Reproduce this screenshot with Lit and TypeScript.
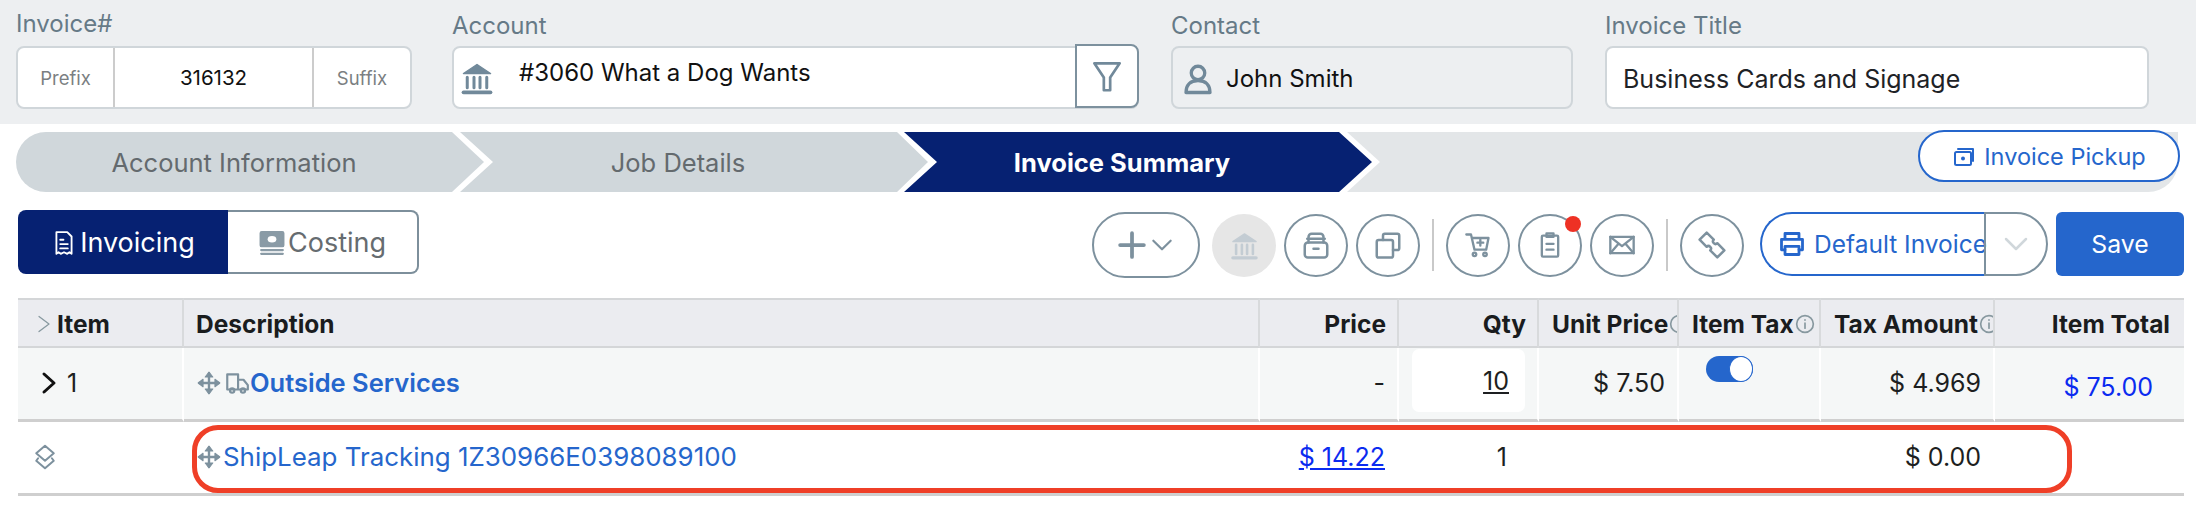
import { LitElement, html, css, svg } from 'lit';
import { customElement } from 'lit/decorators.js';

const icon = (size: number, body: unknown, sw = 2) => html`<svg class="ic" width=${size} height=${size} viewBox="0 0 24 24" fill="none" stroke="currentColor" stroke-width=${sw} stroke-linecap="round" stroke-linejoin="round">${body}</svg>`;

const bank = svg`<path d="M3 9 12 3l9 6z" fill="currentColor" stroke-width="1"/><path d="M5.500 11.500v7M10 11.500v7M14 11.500v7M18.500 11.500v7"/><path d="M3 21.500h18" stroke-width="2.500"/>`;
const move = svg`<path d="M12 3v18M3 12h18" stroke-width="2.200"/><path d="M8.500 6.500 12 2l3.500 4.500zM8.500 17.500 12 22l3.500-4.500zM6.500 8.500 2 12l4.500 3.500zM17.500 8.500 22 12l-4.500 3.500z" fill="currentColor" stroke-width="1"/>`;
const info = svg`<circle cx="12" cy="12" r="10"/><path d="M12 11v6M12 7v.5"/>`;

@customElement('app-root')
export class AppRoot extends LitElement {
  static styles = css`
    :host { display: block; position: relative; width: 2196px; height: 518px; background: #fff; overflow: hidden; font-family: Inter, 'Liberation Sans', sans-serif; color: #212529; }
    .ic { display: block; flex: none; }

    .top { display: flex; height: 124px; box-sizing: border-box; background: #edeff1; padding: 14px 0 0 16px; }
    .field { display: flex; flex-direction: column; gap: 8px; }
    .field label { font-size: 24px; line-height: 24px; color: #667a87; }
    .box { display: flex; align-items: center; box-sizing: border-box; height: 63px; border: 2px solid #d0d6da; border-radius: 8px; background: #fff; font-size: 24px; }
    .invoice { width: 396px; margin-right: 40px; }
    .invoice label { margin-top: -2px; margin-bottom: 2px; }
    .invoice .box span { display: flex; align-items: center; justify-content: center; height: 100%; font-size: 18.500px; }
    .side { color: #7b7f82; width: 95px; }
    .side.end { flex: 1; }
    .invoice .box .num { width: 197px; color: #111; font-size: 20.500px; border-left: 2px solid #ccc; border-right: 2px solid #ccc; }
    .account { width: 687px; margin-right: 32px; }
    .account .box { position: relative; padding-left: 5px; gap: 24px; color: #111; }
    .account .name { margin-top: -11px; }
    .muted { color: #71899a; }
    .filter { position: absolute; right: -2px; top: -4px; width: 64px; height: 64px; box-sizing: border-box; display: flex; align-items: center; justify-content: center; background: #fff; border: 2px solid #7d919e; border-radius: 0 8px 8px 0; color: #71899a; }
    .contact { width: 402px; margin-right: 32px; }
    .contact .box { background: #edeff1; padding: 2px 0 0 7px; gap: 10px; color: #111; }
    .title { width: 544px; }
    .title .box { padding: 2px 0 0 16px; color: #1e2226; font-size: 25px; }

    .steps { position: relative; height: 60px; margin: 8px 0 0 16px; width: 2162px; background: #e3e6e8; border-radius: 0 0 30px 0; }
    .under { position: absolute; left: 0; top: 0; width: 1364px; height: 60px; background: #fff; clip-path: polygon(0 0, 1331px 0, 1364px 50%, 1331px 100%, 0 100%); }
    .step { position: absolute; top: 0; width: 468px; height: 60px; box-sizing: border-box; padding: 1px 32px 0 0; display: flex; align-items: center; justify-content: center; font-size: 25.500px; color: #646a6e; background: #d0d7db; }
    .s1 { left: 0; border-radius: 30px 0 0 30px; clip-path: polygon(0 0, 436px 0, 468px 50%, 436px 100%, 0 100%); }
    .s2 { left: 444px; clip-path: polygon(0 0, 437px 0, 468px 50%, 437px 100%, 0 100%, 33px 50%); }
    .s3 { left: 888px; color: #fff; font-weight: 700; background: #062172; clip-path: polygon(0 0, 435px 0, 468px 50%, 435px 100%, 0 100%, 33px 50%); }
    .pickup { position: absolute; right: -2px; top: -2px; width: 262px; height: 52px; box-sizing: border-box; display: flex; align-items: center; justify-content: center; gap: 8px; background: #fff; border: 2px solid #2566cc; border-radius: 26px; color: #2566cc; font-size: 23.500px; }

    .bar { display: flex; align-items: flex-start; height: 66px; margin-top: 18px; padding-left: 18px; }
    .tabs { display: flex; height: 64px; width: 401px; margin-right: 673px; flex: none; }
    .tab { display: flex; align-items: center; justify-content: center; gap: 3px; padding-top: 1px; font-size: 27px; box-sizing: border-box; }
    .tab.on { width: 210px; background: #062172; color: #fff; border-radius: 8px 0 0 8px; }
    .tab.off { flex: 1; background: #fff; color: #666c70; border: 2px solid #7d8f9b; border-left: 0; border-radius: 0 8px 8px 0; }
    .money { color: #8a9ba6; }
    .tools { display: flex; align-items: center; gap: 8px; height: 66px; margin-top: 2px; }
    .circ { position: relative; width: 64px; height: 63px; box-sizing: border-box; display: flex; align-items: center; justify-content: center; border: 2px solid #7d919e; border-radius: 50%; color: #7d919e; }
    .circ.add { width: 108px; height: 66px; margin-right: 4px; border-radius: 33px; gap: 2px; }
    .circ.dim { border: 0; background: #e6e6e6; color: #c3ccd3; }
    .dot { position: absolute; right: -1px; top: 0; width: 16px; height: 16px; border-radius: 50%; background: #ee3124; }
    .sep { width: 2px; height: 52px; background: #c9c9c9; margin: 0 4px; }
    .print { display: flex; height: 64px; margin: 2px 0 0 16px; }
    .print .main { width: 224px; box-sizing: border-box; display: flex; align-items: center; gap: 8px; padding-left: 16px; border: 2px solid #2566cc; border-right: 0; border-radius: 32px 0 0 32px; color: #2566cc; font-size: 24.500px; white-space: nowrap; }
    .print .more { width: 64px; box-sizing: border-box; display: flex; align-items: center; justify-content: center; border: 2px solid #7d919e; border-radius: 0 32px 32px 0; color: #d0d7db; }
    .save { width: 128px; height: 64px; margin: 2px 0 0 8px; display: flex; align-items: center; justify-content: center; background: #2566cc; border-radius: 6px; color: #fff; font-size: 24.800px; }

    .grid { display: grid; grid-template-columns: 166px 1076px 139px 140px 140px 142px 174px 1fr; margin: 22px 12px 0 18px; font-size: 25px; }
    .h { display: flex; align-items: center; justify-content: flex-end; box-sizing: border-box; height: 50px; padding: 2px 11px 0 0; background: #ebecf0; border-top: 2px solid #d4d6d8; border-bottom: 2px solid #d4d6d8; border-right: 2px solid #d8dadc; font-weight: 700; font-size: 24.500px; color: #1a1c1e; white-space: nowrap; overflow: hidden; }
    .h.left { justify-content: flex-start; padding: 2px 0 0 12px; }
    .h.first { padding-left: 16px; gap: 3px; }
    .h.tight { justify-content: flex-start; padding: 2px 0 0 13px; }
    .h.last { border-right: 0; padding-right: 14px; }
    .info { color: #87989f; margin-left: 1px; flex: none; }
    .caret { color: #87989f; }

    .c, .r { display: flex; align-items: center; justify-content: flex-end; box-sizing: border-box; height: 74px; padding: 0 14px 2px 0; color: #1d1f21; border-bottom: 3px solid #cfcfcf; white-space: nowrap; }
    .c { background: #f5f7f7; border-right: 2px solid #fff; padding-right: 12px; }
    .r { background: #fff; }
    .c.left, .r.left { justify-content: flex-start; padding-left: 12px; }
    .c.item { gap: 6px; padding-left: 19px; }
    .c.item span { color: #111; }
    .c.qty { align-items: flex-start; padding: 1px 12px 0 0; }
    .qbox { width: 113px; height: 63px; padding: 0 16px 0 0; box-sizing: border-box; display: flex; align-items: center; justify-content: flex-end; background: #fff; border-radius: 7px; text-decoration: underline; }
    .c.tax { justify-content: flex-start; align-items: flex-start; padding: 8px 0 0 27px; }
    .c.last { border-right: 0; color: #0b2bf0; padding: 6px 31px 0 0; }
    .c.link { font-weight: 600; font-size: 25.500px; color: #2566cc; }
    .r.link { font-size: 25.900px; color: #2566cc; }
    .mv { color: #7d919e; margin-right: 1px; }
    .truck { color: #7d919e; margin: 0 0 0 1px; }
    .toggle { position: relative; width: 47px; height: 26px; border-radius: 13px; background: #2566cc; }
    .toggle i { position: absolute; right: 0; top: 0; width: 22px; height: 24px; border: 1px solid #2566cc; border-radius: 50%; background: #fff; }
    .price { color: #0b2bf0; text-decoration: underline; }
    .r.one { padding-right: 32px; }
    .frame { position: absolute; left: 192px; top: 425px; width: 1880px; height: 68px; box-sizing: border-box; border: 5px solid #ef3f27; border-radius: 26px; pointer-events: none; }
  `;

  render() {
    return html`
      <div class="top">
        <div class="field invoice">
          <label>Invoice#</label>
          <div class="box"><span class="side">Prefix</span><span class="num">316132</span><span class="side end">Suffix</span></div>
        </div>
        <div class="field account">
          <label>Account</label>
          <div class="box">
            <span class="muted">${icon(36, bank)}</span><span class="name">#3060 What a Dog Wants</span>
            <div class="filter">${icon(38, svg`<path d="M4 4h16l-6 9v8h-4v-8z"/>`, 1.700)}</div>
          </div>
        </div>
        <div class="field contact">
          <label>Contact</label>
          <div class="box">
            <span class="muted">${icon(36, svg`<circle cx="12" cy="8" r="4.500"/><path d="M4 21c0-5 3-8 8-8s8 3 8 8z"/>`, 2.200)}</span>John Smith
          </div>
        </div>
        <div class="field title">
          <label>Invoice Title</label>
          <div class="box">Business Cards and Signage</div>
        </div>
      </div>

      <div class="steps">
        <div class="under"></div>
        <div class="step s1">Account Information</div>
        <div class="step s2">Job Details</div>
        <div class="step s3">Invoice Summary</div>
        <div class="pickup">${icon(24, svg`<rect x="3" y="8" width="16" height="13" rx="1.500"/><path d="M6 5h15v12"/><circle cx="11" cy="14.500" r="2" fill="currentColor" stroke="none"/>`)}Invoice Pickup</div>
      </div>

      <div class="bar">
        <div class="tabs">
          <div class="tab on">${icon(26, svg`<path d="M5 2h10l4 4v16l-2-1.500-2 1.500-3-1.500-3 1.500-2-1.500-2 1.500z"/><path d="M8.500 9h3M8.500 13h7M8.500 17h7"/>`, 1.700)}Invoicing</div>
          <div class="tab off"><span class="money">${icon(26, svg`<rect x="1.500" y="2" width="21" height="13" rx="1" fill="currentColor"/><ellipse cx="12" cy="8.500" rx="4" ry="3" fill="#fff" stroke="none"/><path d="M2 18.500h20M2 22h20"/>`)}</span>Costing</div>
        </div>
        <div class="tools">
          <div class="circ add">${icon(30, svg`<path d="M12 2.500v19M2.500 12h19"/>`, 3)}${icon(26, svg`<path d="M4 8l8 8 8-8"/>`)}</div>
          <div class="circ dim">${icon(31, bank)}</div>
          <div class="circ">${icon(30, svg`<rect x="3" y="10" width="18" height="12" rx="2.500"/><path d="M6 10V5.500A2.500 2.500 0 0 1 8.500 3h7A2.500 2.500 0 0 1 18 5.500V10M5 7h14M10 15h4"/>`)}</div>
          <div class="circ">${icon(30, svg`<rect x="3" y="8" width="13" height="14" rx="1.500"/><path d="M8 8V4.500A1.500 1.500 0 0 1 9.500 3h10A1.500 1.500 0 0 1 21 4.500v10a1.500 1.500 0 0 1-1.500 1.500H16"/>`)}</div>
          <div class="sep"></div>
          <div class="circ">${icon(28, svg`<path d="M2 3h4l3 13h10l2-10H7"/><circle cx="9" cy="20" r="1.500"/><circle cx="18" cy="20" r="1.500"/><path d="M14 7.500v5M11.500 10h5"/>`)}</div>
          <div class="circ">${icon(28, svg`<rect x="5" y="4" width="14" height="18" rx="1"/><path d="M9 2h6v3H9zM9 11h6M9 16h6"/>`)}<span class="dot"></span></div>
          <div class="circ">${icon(28, svg`<rect x="2" y="5" width="20" height="14"/><path d="M2 5l10 8 10-8M2 19l7-8M22 19l-7-8"/>`)}</div>
          <div class="sep"></div>
          <div class="circ">${icon(30, svg`<path transform="rotate(-45 12 12)" d="M8 2h8v8a2 2 0 0 0 0 4v8H8v-8a2 2 0 0 0 0-4z"/>`)}</div>
        </div>
        <div class="print">
          <div class="main">${icon(28, svg`<path d="M6 8V3h12v5M6 17H3V8h18v9h-3"/><rect x="6" y="14" width="12" height="7"/>`, 2.400)}Default Invoice</div>
          <div class="more">${icon(30, svg`<path d="M4 8l8 8 8-8"/>`)}</div>
        </div>
        <div class="save">Save</div>
      </div>

      <div class="grid">
        <div class="h left first"><span class="caret">${icon(20, svg`<path d="M6 3l12 9-12 9"/>`, 1.500)}</span>Item</div>
        <div class="h left">Description</div>
        <div class="h">Price</div>
        <div class="h">Qty</div>
        <div class="h tight">Unit Price<span class="info">${icon(20, info)}</span></div>
        <div class="h tight">Item Tax<span class="info">${icon(20, info)}</span></div>
        <div class="h tight">Tax Amount<span class="info">${icon(20, info)}</span></div>
        <div class="h last">Item Total</div>

        <div class="c left item"><span>${icon(24, svg`<path d="M7 3l10 9-10 9"/>`, 3)}</span>1</div>
        <div class="c left link"><span class="mv">${icon(26, move)}</span><span class="truck">${icon(26, svg`<path d="M3 4h10v14H3zM13 9h5l4 5v4h-9"/><circle cx="7.500" cy="19" r="2"/><circle cx="17.500" cy="19" r="2"/>`)}</span>Outside Services</div>
        <div class="c">-</div>
        <div class="c qty"><span class="qbox">10</span></div>
        <div class="c">$ 7.50</div>
        <div class="c tax"><span class="toggle"><i></i></span></div>
        <div class="c">$ 4.969</div>
        <div class="c last">$ 75.00</div>

        <div class="r left"><span class="mv">${icon(30, svg`<path d="M12 3l7 6-7 6-7-6zM6.500 13 5 15l7 6 7-6-1.500-2"/>`, 1.600)}</span></div>
        <div class="r left link"><span class="mv">${icon(26, move)}</span>ShipLeap Tracking 1Z30966E0398089100</div>
        <div class="r"><span class="price">$ 14.22</span></div>
        <div class="r one">1</div>
        <div class="r"></div>
        <div class="r"></div>
        <div class="r">$ 0.00</div>
        <div class="r"></div>
      </div>
      <div class="frame"></div>
    `;
  }
}
